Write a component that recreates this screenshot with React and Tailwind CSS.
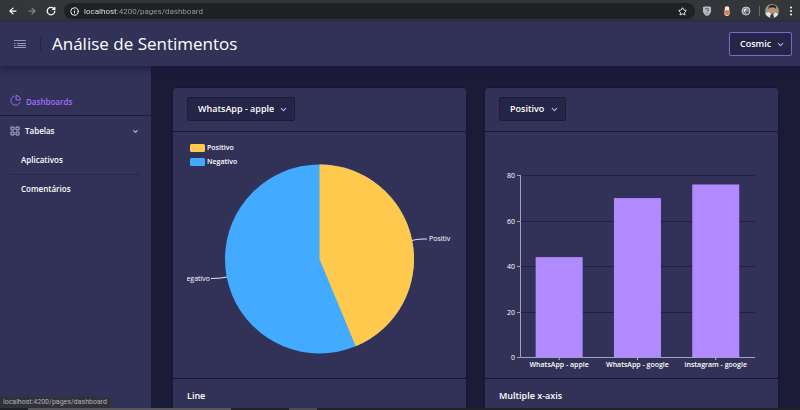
import React from 'react';
import { ArrowLeft, ArrowRight, ChevronDown, Info, RotateCw, Star } from 'lucide-react';

const bars = [
  { label: 'WhatsApp - apple', value: 44 },
  { label: 'WhatsApp - google', value: 70 },
  { label: 'instagram - google', value: 76 },
];

const ticks = [0, 20, 40, 60, 80];

function Dropdown({ label, value, options, className }) {
  return (
    <div className={`relative ${className}`}>
      <select
        aria-label={label}
        defaultValue={value}
        className="block h-full w-full appearance-none rounded-[2px] bg-transparent pl-[10px] pr-5 font-semibold text-white outline-none"
      >
        {options.map((option) => (
          <option key={option}>{option}</option>
        ))}
      </select>
      <ChevronDown className="pointer-events-none absolute inset-y-0 right-[6px] my-auto size-[9px] text-[#b4b4db]" strokeWidth={3} />
    </div>
  );
}

function BrowserBar() {
  return (
    <div className="flex h-[22px] shrink-0 items-center bg-[#35363a] pl-2 pr-1 text-white">
      <button aria-label="Voltar"><ArrowLeft className="size-[10px]" strokeWidth={3} /></button>
      <button aria-label="Avançar" className="ml-[9px] text-[#85878b]"><ArrowRight className="size-[10px]" strokeWidth={3} /></button>
      <button aria-label="Recarregar" className="ml-[9px]"><RotateCw className="size-[10px]" strokeWidth={3} /></button>
      <div className="ml-2 flex h-4 flex-1 items-center rounded-full bg-[#202124] pl-[6px] pr-[6px]">
        <Info className="size-[9px]" strokeWidth={2.5} />
        <input
          aria-label="Endereço"
          defaultValue="localhost:4200/pages/dashboard"
          className="ml-[5px] h-4 min-w-0 flex-1 bg-[linear-gradient(to_right,#f1f3f4_33px,#9aa0a6_33px)] bg-clip-text font-[Roboto,sans-serif] text-[8px] text-transparent outline-none"
        />
        <button aria-label="Favoritar" className="mr-[2px]"><Star className="size-[9px]" strokeWidth={2.5} /></button>
      </div>
      <svg viewBox="0 0 10 10" className="ml-[7px] size-[10px]">
        <path d="M1 1Q5-.5 9 1V6Q8 9 5 10 2 9 1 6Z" fill="#b6b8c2" />
        <path d="M3.5 3.5Q4 2.3 5.2 2.4 6.7 2.6 6.3 4 5.2 4.8 5.1 5.8M5 7V8" fill="none" stroke="#666a78" strokeWidth="1.1" />
      </svg>
      <svg viewBox="0 0 10 10" className="ml-[10px] size-[10px]">
        <path d="M3 1Q5-.5 7 1L7.8 8Q7 10 5 10 3 10 2.2 8Z" fill="#f1ebe7" />
        <path d="M3 5Q5 3 7.2 5L7.6 8Q5 10 2.6 8Z" fill="#e87c3c" />
      </svg>
      <svg viewBox="0 0 10 10" className="ml-[9px] size-[10px]">
        <circle cx="5" cy="5" r="4" fill="#85878b" stroke="#c8cacc" />
        <path d="M3 6Q2 2.5 6 2.5L4 5Z" fill="#f1f1f1" />
        <circle cx="6.5" cy="6.5" r="1.2" fill="#505256" />
      </svg>
      <div className="ml-2 h-[10px] w-px bg-[#66686c]" />
      <svg viewBox="0 0 14 14" className="ml-[5px] size-[14px]">
        <clipPath id="avatar"><circle cx="7" cy="7" r="7" /></clipPath>
        <g clipPath="url(#avatar)">
          <rect width="14" height="14" fill="#8b9c80" />
          <path d="M0 14V9L5 8H10L14 11V14Z" fill="#e7e9ea" />
          <ellipse cx="7.5" cy="6.5" rx="3" ry="4.2" fill="#c78d72" />
          <path d="M3.5 5Q3 1 7.5 1 12 1 11 5L9.5 3.5H5Z" fill="#2b211f" />
          <path d="M5 12L7.5 9 9.5 14H5Z" fill="#343842" />
        </g>
      </svg>
      <button aria-label="Menu do navegador" className="ml-[9px] mr-[2px]">
        <svg viewBox="0 0 6 10" className="h-[10px] w-[6px]" fill="currentColor">
          <circle cx="3" cy="1.5" r="1" /><circle cx="3" cy="5" r="1" /><circle cx="3" cy="8.5" r="1" />
        </svg>
      </button>
    </div>
  );
}

function Header() {
  return (
    <header className="relative z-10 flex h-11 shrink-0 items-center bg-[#323259] pl-[14px] pr-2 shadow-[0_2px_8px_#1a1a3a]">
      <button aria-label="Alternar menu" className="text-[#b4b4db]">
        <svg viewBox="0 0 12 10" className="h-[10px] w-3" fill="none" stroke="currentColor" strokeLinecap="round">
          <path d="M.5 1.5H11.5M3.5 4.5H11.5M.5 4.5H1M3.5 6.5H11.5M.5 6.5H1M.5 8.500H11.5" strokeWidth=".8" />
        </svg>
      </button>
      <div className="ml-[14px] h-[14px] w-px bg-[#25254a]" />
      <h1 className="ml-[11px] flex-1 text-[17px] leading-6">Análise de Sentimentos</h1>
      <Dropdown
        label="Tema"
        value="Cosmic"
        options={['Cosmic']}
        className="h-6 w-[63px] rounded-[2px] border border-[#8264d0] bg-[#252547] text-[9px]"
      />
    </header>
  );
}

function Sidebar() {
  return (
    <nav className="w-[151px] shrink-0 bg-[#323259] pt-5 text-[8px] font-semibold">
      <a href="#dashboards" className="flex h-[30px] items-center border-b border-[#1b1b38] pl-[10px] pt-[3px] text-[#a16eff]">
        <svg viewBox="0 0 10 10" className="mb-1 mr-[5px] size-[11px]" fill="none" stroke="currentColor" strokeWidth=".9" strokeLinejoin="round">
          <path d="M4 1A4.2 4.2 0 1 0 9 6.5M5.5.5V4.5H9.5A4 4 0 0 0 5.5.5Z" />
        </svg>
        Dashboards
      </a>
      <button className="flex h-[30px] w-full items-center pl-[10px] pr-3">
        <svg viewBox="0 0 10 10" className="mr-[5px] size-[10px] text-[#b4b4db]" fill="none" stroke="currentColor">
          <path d="M1 1H4V4H1ZM6 1H9V4H6ZM1 6H4V9H1ZM6 6H9V9H6Z" />
        </svg>
        Tabelas
        <ChevronDown className="ml-auto size-[7px] text-[#b4b4db]" strokeWidth={4} />
      </button>
      <div className="pl-[10px] pr-3">
        <a href="#aplicativos" className="flex h-[29px] items-center border-b border-[#262649] pl-[11px]">Aplicativos</a>
        <a href="#comentarios" className="flex h-7 items-center pl-[11px]">Comentários</a>
      </div>
    </nav>
  );
}

function PieChart() {
  return (
    <svg viewBox="0 0 265 246" className="block w-full" role="img" aria-label="Sentimentos">
      <g fill="#fff" fontSize="7">
        <rect x="3" y="12" width="15" height="8" rx="1.5" fill="#ffc94d" />
        <text x="20" y="18" fontWeight="600">Positivo</text>
        <rect x="3" y="26" width="15" height="8" rx="1.5" fill="#42aaff" />
        <text x="20" y="32" fontWeight="600">Negativo</text>
        <text x="242" y="109">Positiv</text>
        <text x="23" y="149" textAnchor="end">egativo</text>
      </g>
      <circle cx="132.500" cy="127" r="94.500" fill="#42aaff" />
      <path d="M132.500 127V32.500A94.500 94.500 0 0 1 168.700 214.300Z" fill="#ffc94d" />
      <path d="M225 108.500Q229 107 240 107M40 145Q34 146.500 24 146.500" fill="none" stroke="#e4e4f4" strokeWidth="1" />
    </svg>
  );
}

function BarChart() {
  const baseline = 225;
  const unit = 2.27;
  const band = 78.3;
  return (
    <svg viewBox="0 0 265 246" className="block w-full" role="img" aria-label="Comentários por aplicativo">
      {ticks.map((tick) => {
        const y = Math.round(baseline - tick * unit) + 0.5;
        return (
          <g key={tick}>
            {tick > 0 && <path d={`M21 ${y}H256`} stroke="#1f1f40" />}
            <path d={`M18 ${y}H21`} stroke="#a1a1c4" />
            <text x="16" y={y + 2} textAnchor="end" fill="#fff" fontSize="7">{tick}</text>
          </g>
        );
      })}
      {bars.map(({ label, value }, index) => {
        const center = 21 + band * (index + 0.5);
        return (
          <g key={label}>
            <rect x={center - 23.5} y={baseline - value * unit} width="47" height={value * unit} fill="#b18aff" />
            <path d={`M${center} 225V228`} stroke="#c9c0ee" />
            <text x={center} y="235" textAnchor="middle" fill="#fff" fontSize="7" fontWeight="600">{label}</text>
          </g>
        );
      })}
      <path d="M21.500 43V225.500H256" fill="none" stroke="#a1a1c4" />
    </svg>
  );
}

function ChartCard({ control, footer, children }) {
  return (
    <section className="min-w-0 flex-1 rounded-[3px] bg-[#323259] shadow-[0_0_2px_#101030]">
      <div className="h-11 border-b border-[#1b1b38] px-[14px] pt-[9px]">{control}</div>
      <div className="px-[14px]">{children}</div>
      <h2 className="border-t border-[#15152f] px-[14px] pb-5 pt-[10px] text-[9px] font-semibold leading-[14px]">{footer}</h2>
    </section>
  );
}

export default function App() {
  return (
    <div className="relative flex h-screen flex-col overflow-hidden bg-[#1b1b38] font-['Open_Sans',sans-serif] text-white">
      <BrowserBar />
      <Header />
      <div className="flex min-h-0 flex-1">
        <Sidebar />
        <main className="flex min-w-0 flex-1 items-start gap-[19px] overflow-hidden px-[22px] pt-[22px]">
          <ChartCard
            footer="Line"
            control={
              <Dropdown
                label="Aplicativo"
                value="WhatsApp - apple"
                options={bars.map((bar) => bar.label)}
                className="h-6 w-[108px] rounded-[2px] border border-[#1b1b38] bg-[#252547] text-[9px]"
              />
            }
          >
            <PieChart />
          </ChartCard>
          <ChartCard
            footer="Multiple x-axis"
            control={
              <Dropdown
                label="Sentimento"
                value="Positivo"
                options={['Positivo', 'Negativo']}
                className="h-6 w-[67px] rounded-[2px] border border-[#1b1b38] bg-[#252547] text-[9px]"
              />
            }
          >
            <BarChart />
          </ChartCard>
        </main>
      </div>
      <div className="flex h-[2px] shrink-0 bg-[#202027]">
        <div className="ml-7 w-[203px] bg-[#56565c]" />
        <div className="ml-[58px] w-7 bg-[#4b4b51]" />
      </div>
      <div className="absolute bottom-[2px] left-0 rounded-tr-[2px] bg-[#30313b] pl-[3px] pr-1 font-[Roboto,sans-serif] text-[7px] leading-[11px] text-[#b0b1b8]">
        localhost:4200/pages/dashboard
      </div>
    </div>
  );
}
